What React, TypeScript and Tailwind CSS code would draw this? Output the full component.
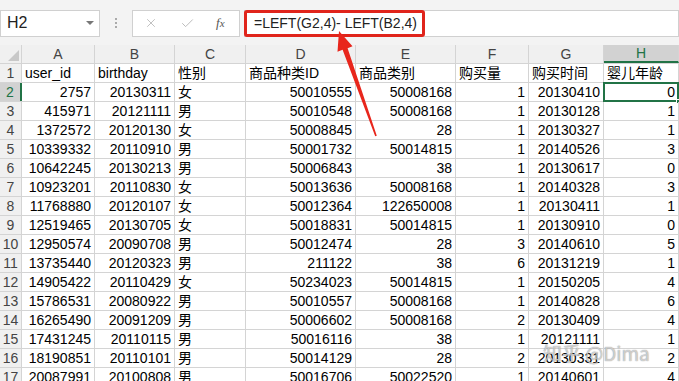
import { X, Check } from 'lucide-react';

const cols = [
  { w: 'w-[73px]' },
  { w: 'w-[80px]' },
  { w: 'w-[71px]' },
  { w: 'w-[110px]' },
  { w: 'w-[100px]' },
  { w: 'w-[73px]' },
  { w: 'w-[75px]' },
  { w: 'w-[75px]' },
];
const letters = ['A', 'B', 'C', 'D', 'E', 'F', 'G', 'H'];

const header = ['user_id', 'birthday', '性别', '商品种类ID', '商品类别', '购买量', '购买时间', '婴儿年龄'];

const rows = [
  ['2757', '20130311', '女', '50010555', '50008168', '1', '20130410', '0'],
  ['415971', '20121111', '男', '50010548', '50008168', '1', '20130128', '1'],
  ['1372572', '20120130', '女', '50008845', '28', '1', '20130327', '1'],
  ['10339332', '20110910', '男', '50001732', '50014815', '1', '20140526', '3'],
  ['10642245', '20130213', '男', '50006843', '38', '1', '20130617', '0'],
  ['10923201', '20110830', '女', '50013636', '50008168', '1', '20140328', '3'],
  ['11768880', '20120107', '女', '50012364', '122650008', '1', '20130411', '1'],
  ['12519465', '20130705', '女', '50018831', '50014815', '1', '20130910', '0'],
  ['12950574', '20090708', '男', '50012474', '28', '3', '20140610', '5'],
  ['13735440', '20120323', '男', '211122', '38', '6', '20131219', '1'],
  ['14905422', '20110429', '女', '50234023', '50014815', '1', '20150205', '4'],
  ['15786531', '20080922', '男', '50010557', '50008168', '1', '20140828', '6'],
  ['16265490', '20091209', '男', '50006602', '50008168', '2', '20130409', '4'],
  ['17431245', '20110115', '男', '50016116', '38', '1', '20121111', '1'],
  ['18190851', '20110101', '男', '50014129', '28', '2', '20130331', '2'],
  ['20087991', '20100808', '男', '50016706', '50022520', '1', '20140601', '4'],
];

const font = { fontFamily: '"Liberation Sans", "Noto Sans CJK SC", sans-serif' };

export default function App() {
  return (
    <div className="relative w-[679px] h-[381px] overflow-hidden bg-white text-[14px] text-black" style={font}>
      {/* formula toolbar */}
      <div className="flex items-center h-[45px] bg-[#f3f3f3] pt-[1px]">
        <div className="flex items-center justify-between w-[100px] h-[27px] bg-white border border-[#d0d0d0] pl-[6px] pr-[5px]">
          <span className="text-[16px] text-[#222]">H2</span>
          <span className="w-0 h-0 border-l-[4px] border-r-[4px] border-t-[4px] border-l-transparent border-r-transparent border-t-[#777]" />
        </div>
        <div className="flex flex-col gap-[2px] w-[32px] items-center">
          <span className="w-[2px] h-[2px] bg-[#aaa]" />
          <span className="w-[2px] h-[2px] bg-[#aaa]" />
          <span className="w-[2px] h-[2px] bg-[#aaa]" />
        </div>
        <div className="flex items-center w-[108px] h-[27px] bg-white border border-[#d0d0d0]">
          <X className="w-[14px] h-[14px] text-[#b8b8b8] ml-[11px]" strokeWidth={1.5} />
          <Check className="w-[15px] h-[15px] text-[#b8b8b8] ml-[22px]" strokeWidth={1.5} />
          <span className="ml-[21px] text-[13px] italic text-[#555]" style={{ fontFamily: '"Liberation Serif", serif' }}>
            f<span className="text-[11px]">x</span>
          </span>
        </div>
        <div className="flex items-center flex-1 h-[27px] ml-[4px] bg-white border border-[#d0d0d0]">
          <div className="flex items-center shrink-0 h-[27px] w-[181px] -ml-[1px] pl-[7px] border-[3px] border-[#e0241b] rounded-[3px] text-[14px] text-[#222] whitespace-nowrap">
            =LEFT(G2,4)- LEFT(B2,4)
          </div>
        </div>
      </div>

      {/* column headers */}
      <div className="flex h-[19px] bg-[#f0f0f0] border-b border-[#d4d4d4]">
        <div className="relative w-[22px] border-r border-[#d4d4d4]">
          <svg className="absolute right-[2px] bottom-[2px]" width="11" height="11">
            <polygon points="11,0 11,11 0,11" fill="#c8c8c8" />
          </svg>
        </div>
        {letters.map((l, i) => (
          <div
            key={l}
            className={`${cols[i].w} flex items-center justify-center border-r border-[#d4d4d4] text-[#444] ${
              l === 'H' ? 'bg-[#d2d2d2] border-b-2 border-b-[#217346] text-[#217346]' : ''
            }`}
          >
            {l}
          </div>
        ))}
      </div>

      {/* header row */}
      <div className="flex h-[19px] border-b border-[#d4d4d4]">
        <div className="w-[22px] bg-[#f0f0f0] border-r border-[#d4d4d4] flex items-center justify-center text-[#444]">1</div>
        {header.map((h, i) => (
          <div key={h} className={`${cols[i].w} flex items-center px-[3px] border-r border-[#d4d4d4] whitespace-nowrap overflow-hidden`}>
            {h}
          </div>
        ))}
      </div>

      {rows.map((r, ri) => (
        <div key={ri} className="flex h-[19px] border-b border-[#d4d4d4]">
          <div
            className={`w-[22px] flex items-center justify-center border-r text-[#444] ${
              ri === 0 ? 'bg-[#d2d2d2] border-r-2 border-r-[#217346] text-[#217346]' : 'bg-[#f0f0f0] border-[#d4d4d4]'
            }`}
          >
            {ri + 2}
          </div>
          {r.map((c, ci) => {
            const sel = ri === 0 && ci === 7;
            return (
              <div
                key={ci}
                className={`${cols[ci].w} relative flex items-center whitespace-nowrap overflow-visible ${
                  ci === 2 ? 'justify-start pl-[3px]' : 'justify-end pr-[3px]'
                } border-r border-[#d4d4d4]`}
              >
                {c}
                {sel && (
                  <>
                    <span className="absolute -left-[1px] -top-[1px] -right-[1px] -bottom-[1px] border-2 border-[#217346]" />
                    <span className="absolute -right-[3px] -bottom-[3px] w-[5px] h-[5px] bg-[#217346] border border-white" />
                  </>
                )}
              </div>
            );
          })}
        </div>
      ))}

      {/* annotation arrow */}
      <svg className="absolute left-0 top-0 pointer-events-none" width="679" height="381">
        <polygon
          points="339,31 352.5,46.3 347.6,48.2 376.8,135.7 375.2,136.3 342.6,49.8 337.5,51.7"
          fill="#e8261c"
        />
      </svg>

      {/* watermark */}
      <div
        className="absolute left-[543px] top-[339px] whitespace-nowrap text-[19px] text-[rgba(255,255,255,0.6)] pointer-events-none"
        style={{ textShadow: '0 0 1px rgba(80,80,80,0.8)', fontFamily: '"Noto Sans CJK SC", sans-serif' }}
      >
        知乎 @Dima
      </div>
    </div>
  );
}
